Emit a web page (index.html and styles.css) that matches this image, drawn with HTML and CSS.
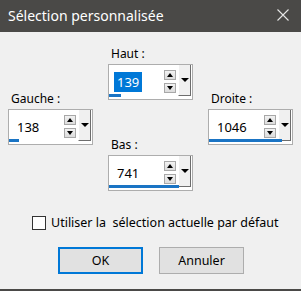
FILE: index.html
```html
<!DOCTYPE html>
<html lang="fr">
<head>
<meta charset="utf-8">
<title>Sélection personnalisée</title>
<link rel="stylesheet" href="styles.css">
</head>
<body>
<div class="dialog">
  <div class="titlebar">
    <span class="title">Sélection personnalisée</span>
    <svg class="close" width="12" height="12" viewBox="0 0 12 12"><path d="M0.5 0.5 L11.5 11.5 M11.5 0.5 L0.5 11.5" stroke="#e6e6e6" stroke-width="1.1" fill="none"/></svg>
  </div>
  <div class="content">
    <div class="fields">
      <div class="col col-side">
        <div class="group">
          <div class="label">Gauche :</div>
          <div class="spin">
            <span class="value">138</span>
            <span class="bar" style="width:10px"></span>
            <span class="arrows"><span class="arr up"></span><span class="arr down"></span></span>
            <span class="drop"></span>
          </div>
        </div>
      </div>
      <div class="col col-mid">
        <div class="group">
          <div class="label">Haut :</div>
          <div class="spin">
            <span class="value"><span class="sel">139</span></span>
            <span class="bar" style="width:12px"></span>
            <span class="arrows"><span class="arr up"></span><span class="arr down"></span></span>
            <span class="drop"></span>
          </div>
        </div>
        <div class="group group-bas">
          <div class="label">Bas :</div>
          <div class="spin">
            <span class="value">741</span>
            <span class="bar" style="width:70px"></span>
            <span class="arrows"><span class="arr up"></span><span class="arr down"></span></span>
            <span class="drop"></span>
          </div>
        </div>
      </div>
      <div class="col col-side">
        <div class="group">
          <div class="label">Droite :</div>
          <div class="spin">
            <span class="value">1046</span>
            <span class="bar" style="width:73px"></span>
            <span class="arrows"><span class="arr up"></span><span class="arr down"></span></span>
            <span class="drop"></span>
          </div>
        </div>
      </div>
    </div>
    <label class="check"><span class="cbox"></span><span>Utiliser la&nbsp; sélection actuelle par défaut</span></label>
    <div class="buttons">
      <button class="btn btn-default">OK</button>
      <button class="btn">Annuler</button>
    </div>
  </div>
</div>
</body>
</html>
```
FILE: styles.css
```css
* { box-sizing: border-box; }
html, body { margin: 0; padding: 0; }
body {
  width: 301px;
  height: 291px;
  overflow: hidden;
  background: #f0f0f0;
  font-family: "Noto Sans", "Open Sans", sans-serif;
  color: #000;
}
.dialog {
  width: 301px;
  height: 291px;
  display: flex;
  flex-direction: column;
  background: #f0f0f0;
  border-bottom: 2px solid #4a4947;
}
.titlebar {
  height: 32px;
  flex: none;
  background: #4a4947;
  display: flex;
  align-items: center;
  justify-content: space-between;
  padding: 0 12px 0 8px;
}
.title {
  color: #fff;
  font-size: 14px;
  line-height: 18px;
  margin-top: -1px;
}
.close { display: block; margin-top: -2px; }
.content {
  flex: 1;
  display: flex;
  flex-direction: column;
}
.fields {
  display: flex;
  gap: 15px;
  padding-left: 8px;
  height: 160px;
}
.col { width: 85px; display: flex; flex-direction: column; }
.col-side { padding-top: 61px; }
.col-mid { padding-top: 16px; }
.group-bas { margin-top: 39px; }
.label {
  font-size: 12px;
  line-height: 16px;
  height: 16px;
  padding-left: 3px;
  margin-top: -2px;
  margin-bottom: 2px;
}
.spin {
  position: relative;
  width: 85px;
  height: 36px;
  background: #fff;
  border: 1px solid #adadad;
  display: flex;
  align-items: center;
}
.value {
  flex: 1;
  font-size: 13px;
  line-height: 20px;
  padding-left: 5px;
  margin-top: -1px;
}
.sel {
  background: #0078d7;
  color: #fff;
  padding: 0 3px;
  display: inline-block;
}
.value:not(:has(.sel)) { padding-left: 8px; }
.bar {
  position: absolute;
  left: 0;
  bottom: 2px;
  height: 3px;
  background: #1a74c4;
  z-index: 2;
}
.arrows {
  width: 12px;
  display: flex;
  flex-direction: column;
  gap: 3px;
  margin-right: 2px;
  margin-top: -2px;
}
.arr {
  height: 10px;
  border: 1px solid #a8a8a8;
  background: linear-gradient(#f2f2f2, #dcdcdc);
  display: flex;
  align-items: center;
  justify-content: center;
}
.arr::after {
  content: "";
  width: 0;
  height: 0;
  border-left: 3px solid transparent;
  border-right: 3px solid transparent;
}
.up::after { border-bottom: 4px solid #000; }
.down::after { border-top: 4px solid #000; }
.drop {
  align-self: stretch;
  width: 13px;
  margin: 0 1px 3px 0;
  background: #f0f0f0;
  border-left: 1px solid #fff;
  border-right: 1px solid #6d6d6d;
  border-bottom: 1px solid #6d6d6d;
  display: flex;
  align-items: center;
  justify-content: center;
}
.drop::after {
  content: "";
  width: 0;
  height: 0;
  border-left: 4px solid transparent;
  border-right: 4px solid transparent;
  border-top: 4px solid #000;
}
.check {
  display: flex;
  align-items: center;
  gap: 5px;
  margin: 23px 0 0 32px;
  font-size: 12.5px;
  line-height: 16px;
}
.cbox {
  width: 14px;
  height: 14px;
  background: #fff;
  border: 1px solid #333;
  flex: none;
}
.buttons {
  display: flex;
  gap: 16px;
  margin: 16px 0 0 58px;
}
.btn {
  width: 85px;
  height: 27px;
  font-family: "Noto Sans", "Open Sans", sans-serif;
  font-size: 12.5px;
  background: #e1e1e1;
  border: 1px solid #adadad;
  padding: 0;
  color: #000;
}
.btn-default { border: 2px solid #0078d7; }
```
